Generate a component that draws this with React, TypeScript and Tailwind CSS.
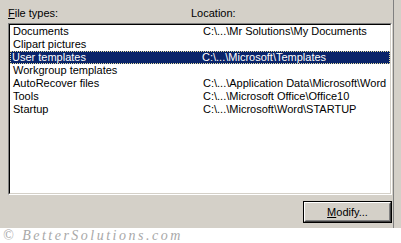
import React from 'react'

type Row = { type: string; location: string }

const rows: Row[] = [
  { type: 'Documents', location: 'C:\\...\\Mr Solutions\\My Documents' },
  { type: 'Clipart pictures', location: '' },
  { type: 'User templates', location: 'C:\\...\\Microsoft\\Templates' },
  { type: 'Workgroup templates', location: '' },
  { type: 'AutoRecover files', location: 'C:\\...\\Application Data\\Microsoft\\Word' },
  { type: 'Tools', location: 'C:\\...\\Microsoft Office\\Office10' },
  { type: 'Startup', location: 'C:\\...\\Microsoft\\Word\\STARTUP' },
]

const selected = 2

export default function App() {
  return (
    <div
      className="w-[401px] h-[243px] overflow-hidden bg-white text-[11px] leading-[13px] text-black"
      style={{ fontFamily: '"Liberation Sans", Arial, sans-serif' }}
    >
      <div className="flex h-[228px] bg-[#d4d0c8]">
        <div className="w-[394px] border-r border-[#808080] pl-[8px] pt-[7px]">
          {/* column labels */}
          <div className="grid grid-cols-[183px_1fr] h-[16px]">
            <span><span className="underline">F</span>ile types:</span>
            <span>Location:</span>
          </div>

          {/* list */}
          <div className="w-[384px] h-[172px] border border-t-[#808080] border-l-[#808080] border-r-white border-b-white">
            <div className="h-full border border-t-black border-l-black border-r-[#d4d0c8] border-b-[#d4d0c8] bg-white">
              {rows.map((r, i) => (
                <div
                  key={r.type}
                  className={
                    i === selected
                      ? 'grid grid-cols-[190px_1fr] h-[13px] pl-[1px] bg-[#0a246a] text-white border border-dotted border-[#e8e0a0]'
                      : 'grid grid-cols-[190px_1fr] h-[13px] pl-[2px] border border-transparent'
                  }
                >
                  <span className="whitespace-nowrap leading-[11px]">{r.type}</span>
                  <span className="whitespace-nowrap leading-[11px]">{r.location}</span>
                </div>
              ))}
            </div>
          </div>

          {/* button */}
          <div className="flex justify-end w-[384px] mt-[6px]">
            <button className="w-[89px] h-[22px] border border-black bg-[#d4d0c8] p-0">
              <div className="h-full border border-t-white border-l-white border-r-[#404040] border-b-[#404040]">
                <div className="h-full flex items-center justify-center border border-t-[#d4d0c8] border-l-[#d4d0c8] border-r-[#808080] border-b-[#808080]">
                  <span><span className="underline">M</span>odify...</span>
                </div>
              </div>
            </button>
          </div>
        </div>
        <div className="flex-1" />
      </div>

      {/* watermark */}
      <div
        className="pl-[3px] pt-[1px] text-[14px] leading-[14px] italic tracking-[2.5px] text-[#a8a8a8]"
        style={{ fontFamily: '"Liberation Serif", serif' }}
      >
        © BetterSolutions.com
      </div>
    </div>
  )
}
